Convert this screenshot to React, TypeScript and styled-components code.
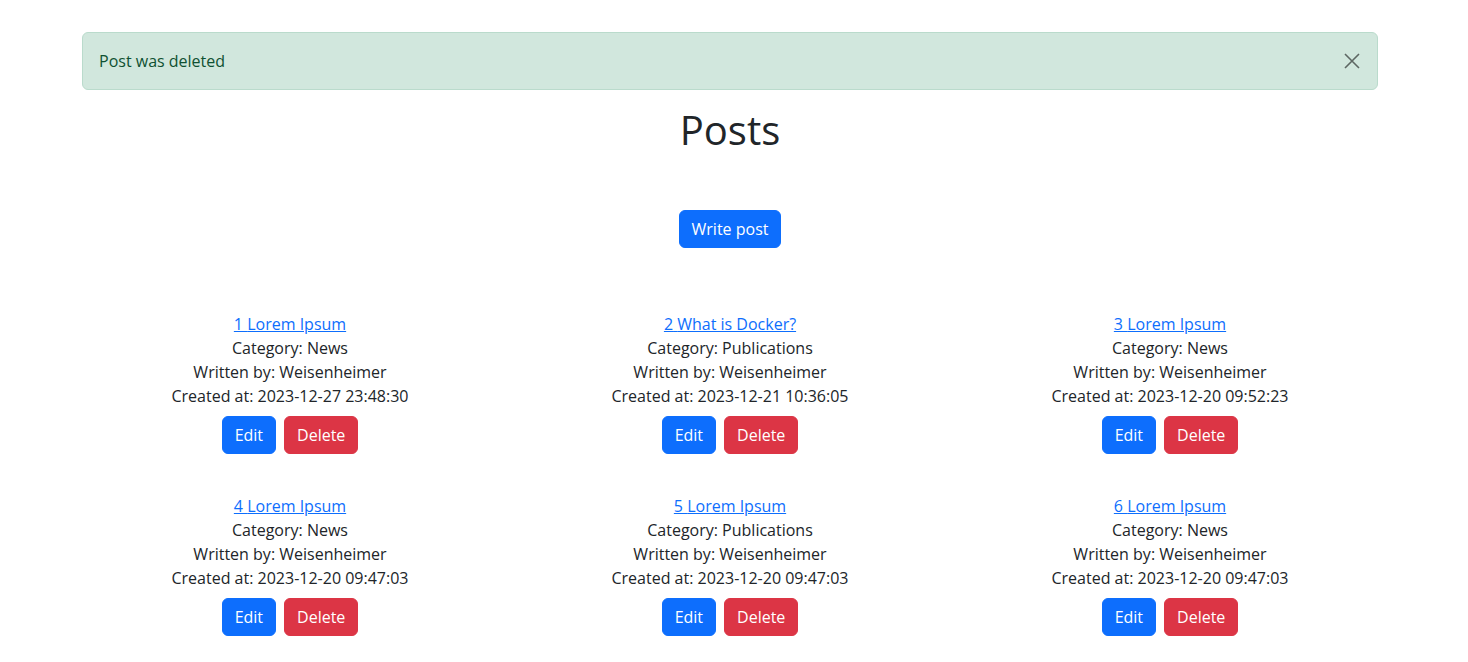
import React, { useState } from 'react';
import styled, { createGlobalStyle } from 'styled-components';

const GlobalStyle = createGlobalStyle`
  * { box-sizing: border-box; }
  body {
    margin: 0;
    font-family: "Open Sans", "Noto Sans", sans-serif;
    font-size: 16px;
    line-height: 1.5;
    color: #212529;
    background: #fff;
  }
`;

const Page = styled.div`
  width: 1460px;
`;

const Container = styled.div`
  max-width: 1320px;
  margin: 0 auto;
  padding: 32px 12px 40px;
`;

const Alert = styled.div`
  display: flex;
  align-items: center;
  justify-content: space-between;
  padding: 16px 13px 16px 16px;
  margin-bottom: 16px;
  background: #d1e7dd;
  border: 1px solid #badbcc;
  border-radius: 6px;
  color: #0f5132;
`;

const CloseButton = styled.button`
  width: 24px;
  height: 24px;
  padding: 0;
  border: 0;
  background: transparent;
  opacity: 0.55;
  cursor: pointer;
  display: flex;
  align-items: center;
  justify-content: center;
`;

const Title = styled.h1`
  margin: 0 0 8px;
  font-size: 40px;
  font-weight: 500;
  line-height: 1.2;
  text-align: center;
`;

const Actions = styled.div`
  display: flex;
  justify-content: center;
  margin: 56px 0 64px;
`;

const Button = styled.button<{ $variant?: 'primary' | 'danger' }>`
  font-family: inherit;
  font-size: 16px;
  line-height: 24px;
  padding: 6px 12px;
  border-radius: 6px;
  border: 1px solid ${({ $variant }) => ($variant === 'danger' ? '#dc3545' : '#0d6efd')};
  background: ${({ $variant }) => ($variant === 'danger' ? '#dc3545' : '#0d6efd')};
  color: #fff;
  cursor: pointer;
`;

const PostGrid = styled.div`
  display: grid;
  grid-template-columns: repeat(3, 1fr);
  margin: 0 -12px;
  row-gap: 40px;
`;

const PostCard = styled.div`
  padding: 0 12px;
  text-align: center;
`;

const PostLink = styled.a`
  color: #0d6efd;
  text-decoration: underline;
  display: block;
`;

const Line = styled.div``;

const ButtonRow = styled.div`
  display: flex;
  justify-content: center;
  gap: 8px;
  margin-top: 8px;
`;

const posts = [
  { id: 1, title: 'Lorem Ipsum', category: 'News', created: '2023-12-27 23:48:30' },
  { id: 2, title: 'What is Docker?', category: 'Publications', created: '2023-12-21 10:36:05' },
  { id: 3, title: 'Lorem Ipsum', category: 'News', created: '2023-12-20 09:52:23' },
  { id: 4, title: 'Lorem Ipsum', category: 'News', created: '2023-12-20 09:47:03' },
  { id: 5, title: 'Lorem Ipsum', category: 'Publications', created: '2023-12-20 09:47:03' },
  { id: 6, title: 'Lorem Ipsum', category: 'News', created: '2023-12-20 09:47:03' },
];

const App: React.FC = () => {
  const [showAlert, setShowAlert] = useState(true);

  return (
    <Page>
      <GlobalStyle />
      <Container>
        {showAlert && (
          <Alert>
            <span>Post was deleted</span>
            <CloseButton aria-label="Close" onClick={() => setShowAlert(false)}>
              <svg width="16" height="16" viewBox="0 0 16 16">
                <path d="M1 1L15 15M15 1L1 15" stroke="#000" strokeWidth="1.6" />
              </svg>
            </CloseButton>
          </Alert>
        )}
        <Title>Posts</Title>
        <Actions>
          <Button>Write post</Button>
        </Actions>
        <PostGrid>
          {posts.map(post => (
            <PostCard key={post.id}>
              <PostLink href="#">{post.id} {post.title}</PostLink>
              <Line>Category: {post.category}</Line>
              <Line>Written by: Weisenheimer</Line>
              <Line>Created at: {post.created}</Line>
              <ButtonRow>
                <Button>Edit</Button>
                <Button $variant="danger">Delete</Button>
              </ButtonRow>
            </PostCard>
          ))}
        </PostGrid>
      </Container>
    </Page>
  );
};

export default App;
